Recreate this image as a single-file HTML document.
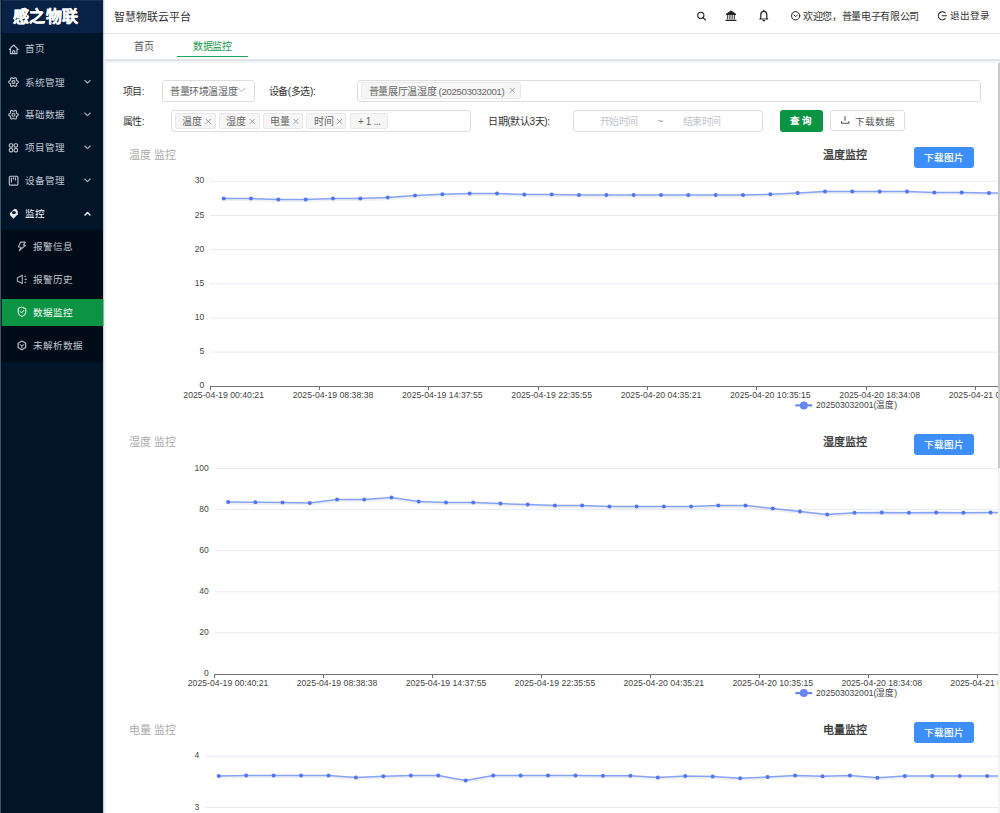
<!DOCTYPE html>
<html lang="zh-CN"><head><meta charset="utf-8">
<style>
*{box-sizing:border-box;margin:0;padding:0}
html,body{width:1000px;height:813px;overflow:hidden;font-family:"Liberation Sans",sans-serif;background:#fff;color:#333}
.a{position:absolute;white-space:nowrap}
.side{position:absolute;left:0;top:0;width:103px;height:813px;background:#011428}
.edge{position:absolute;left:0;top:0;width:1.2px;height:813px;background:#34596c;box-shadow:0.8px 0 0 #000a14}
.logo{position:absolute;left:0;top:0;width:103px;height:33px;background:#0a2146;border-top:1px solid #17304f;color:#fff;font-weight:bold;-webkit-text-stroke:0.35px #fff;font-size:16px;line-height:32px;padding-left:13px;letter-spacing:0.3px}
.mi{position:absolute;left:0;width:103px;height:33px;color:#c0c6cf;font-size:9.6px;line-height:33px}
.mi .t{position:absolute;left:25px;top:0}
.mi svg{position:absolute}
.sub{position:absolute;left:0;top:230px;width:103px;height:132px;background:#020c19}
.hdr{position:absolute;left:103px;top:0;width:897px;height:34px;background:#fff;border-bottom:1px solid #e6e6e6}
.tabs{position:absolute;left:103px;top:34px;width:897px;height:25px;background:#fff}
.band{position:absolute;left:105px;top:58.8px;width:895px;height:2.2px;background:#e2e2e2}
.band2{position:absolute;left:105px;top:61px;width:895px;height:1.8px;background:#f0f3f8}
.shadow{position:absolute;left:103px;top:0;width:1.6px;height:813px;background:linear-gradient(to right,#b8bcc4,rgba(255,255,255,0))}
.cardl{position:absolute;left:105.2px;top:62.8px;width:1.2px;height:751px;background:#f1f1f3}
.lbl{position:absolute;font-size:10px;letter-spacing:-0.38px;color:#333;line-height:23.2px;white-space:nowrap}
.box{position:absolute;border:1px solid #dedede;border-radius:3px;background:#fff}
.tag{position:absolute;height:16px;top:112.5px;background:#f6f6f7;border:1px solid #e8e8ea;border-radius:2px;font-size:9.5px;color:#666;line-height:14px;white-space:nowrap}
.btn{position:absolute;border-radius:3px;font-size:9.5px;line-height:21px;text-align:center;white-space:nowrap}
.gt{position:absolute;left:129px;font-size:11px;line-height:16px;color:#aaa;white-space:nowrap}
.ct{position:absolute;left:823px;font-size:11px;line-height:16px;color:#333;-webkit-text-stroke:0.3px #333;white-space:nowrap}
.dl{position:absolute;left:914.4px;width:60px;height:21.4px;background:#3d8ef8;border-radius:3px;color:#fff;-webkit-text-stroke:0.2px #fff;font-size:9.5px;line-height:21.4px;text-align:center}
.ch{position:absolute;left:0;top:0;pointer-events:none}
.yl{font-size:8.5px;fill:#444;font-family:"Liberation Sans",sans-serif}
.xl{font-size:8.7px;fill:#444;font-family:"Liberation Sans",sans-serif}
.lg{font-size:8.6px;fill:#444;font-family:"Liberation Sans",sans-serif}
</style></head><body>
<div class="side">
  <div class="logo">感之物联</div>
  <div class="mi" style="top:32.3px"><span class="t">首页</span></div>
  <div class="mi" style="top:65.8px"><span class="t">系统管理</span></div>
  <div class="mi" style="top:97.7px"><span class="t">基础数据</span></div>
  <div class="mi" style="top:130.7px"><span class="t">项目管理</span></div>
  <div class="mi" style="top:163.6px"><span class="t">设备管理</span></div>
  <div class="mi" style="top:197px;color:#fff"><span class="t">监控</span></div>
  <div class="sub"></div>
  <div style="position:absolute;left:0;top:298.5px;width:103.5px;height:27px;background:#0a9444"></div>
  <div class="mi" style="top:230px"><span class="t" style="left:33px">报警信息</span></div>
  <div class="mi" style="top:263px"><span class="t" style="left:33px">报警历史</span></div>
  <div class="mi" style="top:296px;color:#fff"><span class="t" style="left:33px">数据监控</span></div>
  <div class="mi" style="top:329px"><span class="t" style="left:33px">未解析数据</span></div>
</div>
<div class="hdr"></div>
<div class="a" style="left:114px;top:9px;font-size:11px;line-height:16px;color:#333">智慧物联云平台</div>
<div class="a" style="left:803px;top:8.7px;font-size:10px;letter-spacing:-0.35px;line-height:16px;color:#333">欢迎您，普量电子有限公司</div>
<div class="a" style="left:950px;top:8px;font-size:9.6px;line-height:16px;color:#333">退出登录</div>
<div class="tabs"></div>
<div class="a" style="left:134px;top:38.8px;font-size:10px;letter-spacing:-0.4px;line-height:16px;color:#555">首页</div>
<div class="a" style="left:193px;top:38.8px;font-size:10px;letter-spacing:-0.4px;line-height:16px;color:#1a9a50">数据监控</div>
<div class="a" style="left:177px;top:55.6px;width:71px;height:1.2px;background:#2aa55e"></div>
<div class="band"></div>
<div class="band2"></div>
<div class="shadow"></div>
<div class="cardl"></div>

<!-- filters -->
<div class="lbl" style="left:122.6px;top:79.5px">项目:</div>
<div class="box" style="left:161.5px;top:79.5px;width:93px;height:22px"></div>
<div class="lbl" style="left:170px;top:79.5px;color:#606266">普量环境温湿度</div>
<div class="lbl" style="left:268.5px;top:79.5px">设备(多选):</div>
<div class="box" style="left:357px;top:79.5px;width:624px;height:22px"></div>
<div class="tag" style="left:361px;top:82px;width:160px;height:16.5px"></div>
<div class="lbl" style="left:368.8px;top:79.5px;color:#666">普量展厅温湿度 <span style="font-size:9.7px">(202503032001)</span></div>
<div class="lbl" style="left:122.6px;top:110px">属性:</div>
<div class="box" style="left:171px;top:109.5px;width:300px;height:22px"></div>
<div class="tag" style="left:175px;width:40.5px"></div>
<div class="tag" style="left:219px;width:40.5px"></div>
<div class="tag" style="left:262.7px;width:40.5px"></div>
<div class="tag" style="left:306.2px;width:40.2px"></div>
<div class="tag" style="left:350.4px;width:38px"></div>
<div class="lbl" style="left:182.2px;top:110px;color:#666">温度</div>
<div class="lbl" style="left:226.2px;top:110px;color:#666">湿度</div>
<div class="lbl" style="left:269.9px;top:110px;color:#666">电量</div>
<div class="lbl" style="left:314px;top:110px;color:#666">时间</div>
<div class="lbl" style="left:358px;top:110px;color:#666">+ 1 ...</div>
<svg class="ch" width="1000" height="813" viewBox="0 0 1000 813" fill="none" stroke="#888" stroke-width="0.8">
<path d="M205.8,118.9 L210.8,123.9 M210.8,118.9 L205.8,123.9"/>
<path d="M249.7,118.9 L254.7,123.9 M254.7,118.9 L249.7,123.9"/>
<path d="M293.4,118.9 L298.4,123.9 M298.4,118.9 L293.4,123.9"/>
<path d="M337.1,118.9 L342.1,123.9 M342.1,118.9 L337.1,123.9"/>
<path d="M510,87.9 L514.8,92.7 M514.8,87.9 L510,92.7"/>
</svg>
<div class="lbl" style="left:488px;top:110px">日期(默认3天):</div>
<div class="box" style="left:572.5px;top:109.5px;width:190px;height:22px"></div>
<div class="lbl" style="left:599.5px;top:110px;color:#c0c4cc">开始时间</div>
<div class="lbl" style="left:657.5px;top:110px;color:#999">~</div>
<div class="lbl" style="left:682.5px;top:110px;color:#c0c4cc">结束时间</div>
<div class="btn" style="left:779.5px;top:110px;width:43px;height:21.5px;background:#0a9444;color:#fff;font-weight:bold">查 询</div>
<div class="btn" style="left:829.5px;top:109.5px;width:75px;height:21.5px;border:1px solid #dedede;color:#555;padding-left:15px">下载数据</div>

<div class="edge" style="z-index:5"></div>
<!--ICONS-->
<svg class="ch" width="1000" height="813" viewBox="0 0 1000 813" fill="none" stroke-linecap="round" stroke-linejoin="round">
<g stroke="#bcc3cc" stroke-width="1.15">
<path d="M9.3,49.3 L13.7,45 L18.1,49.3 M10.4,48.3 V53.6 H17 V48.3 M12.6,53.6 V51.3 Q13.7,50 14.8,51.3 V53.6"/>
<path d="M13.50,78.60 L13.81,78.53 L14.16,78.33 L14.57,78.09 L15.03,77.89 L15.49,77.83 L15.90,77.94 L16.20,78.24 L16.38,78.67 L16.43,79.17 L16.43,79.64 L16.44,80.04 L16.53,80.35 L16.75,80.58 L17.09,80.79 L17.51,81.03 L17.91,81.32 L18.19,81.69 L18.30,82.10 L18.19,82.51 L17.91,82.88 L17.51,83.17 L17.09,83.41 L16.75,83.62 L16.53,83.85 L16.44,84.16 L16.43,84.56 L16.43,85.03 L16.38,85.53 L16.20,85.96 L15.90,86.26 L15.49,86.37 L15.03,86.31 L14.57,86.11 L14.16,85.87 L13.81,85.67 L13.50,85.60 L13.19,85.67 L12.84,85.87 L12.43,86.11 L11.97,86.31 L11.51,86.37 L11.10,86.26 L10.80,85.96 L10.62,85.53 L10.57,85.03 L10.57,84.56 L10.56,84.16 L10.47,83.85 L10.25,83.62 L9.91,83.41 L9.49,83.17 L9.09,82.88 L8.81,82.51 L8.70,82.10 L8.81,81.69 L9.09,81.32 L9.49,81.03 L9.91,80.79 L10.25,80.58 L10.47,80.35 L10.56,80.04 L10.57,79.64 L10.57,79.17 L10.62,78.67 L10.80,78.24 L11.10,77.94 L11.51,77.83 L11.97,77.89 L12.43,78.09 L12.84,78.33 L13.19,78.53 L13.50,78.60 Z"/>
<circle cx="13.5" cy="82.1" r="1.5"/>
<path d="M13.50,111.20 L13.81,111.13 L14.16,110.93 L14.57,110.69 L15.03,110.49 L15.49,110.43 L15.90,110.54 L16.20,110.84 L16.38,111.27 L16.43,111.77 L16.43,112.24 L16.44,112.64 L16.53,112.95 L16.75,113.18 L17.09,113.39 L17.51,113.63 L17.91,113.92 L18.19,114.29 L18.30,114.70 L18.19,115.11 L17.91,115.48 L17.51,115.77 L17.09,116.01 L16.75,116.22 L16.53,116.45 L16.44,116.76 L16.43,117.16 L16.43,117.63 L16.38,118.13 L16.20,118.56 L15.90,118.86 L15.49,118.97 L15.03,118.91 L14.57,118.71 L14.16,118.47 L13.81,118.27 L13.50,118.20 L13.19,118.27 L12.84,118.47 L12.43,118.71 L11.97,118.91 L11.51,118.97 L11.10,118.86 L10.80,118.56 L10.62,118.13 L10.57,117.63 L10.57,117.16 L10.56,116.76 L10.47,116.45 L10.25,116.22 L9.91,116.01 L9.49,115.77 L9.09,115.48 L8.81,115.11 L8.70,114.70 L8.81,114.29 L9.09,113.92 L9.49,113.63 L9.91,113.39 L10.25,113.18 L10.47,112.95 L10.56,112.64 L10.57,112.24 L10.57,111.77 L10.62,111.27 L10.80,110.84 L11.10,110.54 L11.51,110.43 L11.97,110.49 L12.43,110.69 L12.84,110.93 L13.19,111.13 L13.50,111.20 Z"/>
<circle cx="13.5" cy="114.7" r="1.5"/>
<rect x="9.3" y="143.7" width="3.4" height="3.4" rx="1.2"/><rect x="14.1" y="143.7" width="3.4" height="3.4" rx="1.2"/>
<rect x="9.3" y="148.5" width="3.4" height="3.4" rx="1.2"/><rect x="14.1" y="148.5" width="3.4" height="3.4" rx="1.2"/>
<rect x="9.3" y="176.2" width="8.6" height="8.9" rx="1.2"/>
<path d="M11.4,178 V182.2 M13.4,177.8 V179 M15.5,177.8 V180"/>
<path d="M84.8,80.3 L87.5,83 L90.2,80.3" stroke="#a9b1bc" stroke-width="1.1"/>
<path d="M84.8,113 L87.5,115.7 L90.2,113" stroke="#a9b1bc" stroke-width="1.1"/>
<path d="M84.8,146 L87.5,148.7 L90.2,146" stroke="#a9b1bc" stroke-width="1.1"/>
<path d="M84.8,179 L87.5,181.7 L90.2,179" stroke="#a9b1bc" stroke-width="1.1"/>
<path d="M20.6,242.1 L25.3,242.1 L23.4,245.1 L25.5,245.3 L19.4,250.6 L21,247.2 L18.4,247 Z" stroke="#aab2bd"/>
<path d="M17.4,277.7 L22.3,275.3 V283.5 L17.4,281.1 Z M24.9,276.6 L25.6,276.2 M25.1,279.4 L26.3,279.4 M24.9,282.2 L25.6,282.6" stroke="#aab2bd" stroke-width="1.1"/>
<path d="M21.9,341.1 L25.7,343.3 V347.6 L21.9,349.8 L18.1,347.6 V343.3 Z" stroke="#b8bec8" stroke-width="1.2"/><path d="M19.9,344.6 L21.9,345.8 L23.9,344.6 M21.9,345.8 V348" stroke="#b8bec8" stroke-width="1"/>
</g>
<path d="M14.6,208.7 Q17.2,208.9 17.7,211.2 L17.8,214.2 L13.5,218.7 L9.9,215.1 L9.8,213.2 Z" fill="#e8eaee"/>
<ellipse cx="13.9" cy="212.6" rx="1.9" ry="1.7" fill="#011428"/>
<path d="M85,215 L87.5,212.5 L90,215" stroke="#fff" stroke-width="1.4"/>
<path d="M22,307.2 L25.8,308.6 V312.2 Q25.8,315.3 22,316.6 Q18.2,315.3 18.2,312.2 V308.6 Z M20.3,311.6 L21.6,312.9 L23.8,310.4" stroke="#fff" stroke-width="1"/>
<g stroke="#222" stroke-width="1.2">
<circle cx="700.8" cy="15.3" r="3.1" stroke-width="1.1"/><path d="M703.2,17.7 L705.4,19.9" stroke-width="1.3"/>
</g>
<g stroke="#222" stroke-width="1">
<path d="M726.3,14.2 L731,10.9 L735.7,14.2 Z" fill="#222"/><path d="M727.7,15.2 V19 M729.9,15.2 V19 M732.1,15.2 V19 M734.3,15.2 V19"/><path d="M726,20.3 H736" stroke-width="1.3"/>
<path d="M759.9,19 H767.7 L766.8,17.8 V14.8 Q766.8,11.6 763.8,11.2 Q760.8,11.6 760.8,14.8 V17.8 Z M763,20.6 H764.6 M763.8,10.4 V11" stroke-width="1.2"/>
<circle cx="795.7" cy="15.8" r="4.1"/><path d="M793.9,14.9 L795.7,16.7 L797.5,14.9"/>
<path d="M945.1,12.9 A4,4 0 1 0 945.1,18.7 M942.2,15.8 H946.6" stroke-width="1.1"/>
</g>
<path d="M845,116.5 V120.3 M841.6,121.5 V123.2 H848.9 V121.5" stroke="#555" stroke-width="1.1"/>
<path d="M238.2,88.2 L241.5,91.8 L244.8,88.2" stroke="#b8b8b8" stroke-width="1"/>
</svg>
<!--/ICONS-->
<!--CHARTS-->
<div class="gt" style="top:146.5px">温度 监控</div>
<div class="ct" style="top:146.5px">温度监控</div>
<div class="dl" style="top:146.6px">下载图片</div>
<svg class="ch" width="1000" height="813" viewBox="0 0 1000 813"><line x1="210" x2="1000" y1="181.30" y2="181.30" stroke="#e6eaf2" stroke-width="1"/><text x="204.2" y="183.40" text-anchor="end" class="yl">30</text><line x1="210" x2="1000" y1="215.47" y2="215.47" stroke="#e6eaf2" stroke-width="1"/><text x="204.2" y="217.57" text-anchor="end" class="yl">25</text><line x1="210" x2="1000" y1="249.63" y2="249.63" stroke="#e6eaf2" stroke-width="1"/><text x="204.2" y="251.73" text-anchor="end" class="yl">20</text><line x1="210" x2="1000" y1="283.80" y2="283.80" stroke="#e6eaf2" stroke-width="1"/><text x="204.2" y="285.90" text-anchor="end" class="yl">15</text><line x1="210" x2="1000" y1="317.97" y2="317.97" stroke="#e6eaf2" stroke-width="1"/><text x="204.2" y="320.07" text-anchor="end" class="yl">10</text><line x1="210" x2="1000" y1="352.13" y2="352.13" stroke="#e6eaf2" stroke-width="1"/><text x="204.2" y="354.23" text-anchor="end" class="yl">5</text><text x="204.2" y="388.40" text-anchor="end" class="yl">0</text><line x1="210" x2="1000" y1="386.5" y2="386.5" stroke="#6e7079" stroke-width="1"/><line x1="210.50" x2="210.50" y1="386.5" y2="390.0" stroke="#6e7079" stroke-width="1"/><line x1="319.50" x2="319.50" y1="386.5" y2="390.0" stroke="#6e7079" stroke-width="1"/><line x1="428.50" x2="428.50" y1="386.5" y2="390.0" stroke="#6e7079" stroke-width="1"/><line x1="538.50" x2="538.50" y1="386.5" y2="390.0" stroke="#6e7079" stroke-width="1"/><line x1="647.50" x2="647.50" y1="386.5" y2="390.0" stroke="#6e7079" stroke-width="1"/><line x1="756.50" x2="756.50" y1="386.5" y2="390.0" stroke="#6e7079" stroke-width="1"/><line x1="866.50" x2="866.50" y1="386.5" y2="390.0" stroke="#6e7079" stroke-width="1"/><line x1="975.50" x2="975.50" y1="386.5" y2="390.0" stroke="#6e7079" stroke-width="1"/><text x="223.67" y="397.80" text-anchor="middle" class="xl">2025-04-19 00:40:21</text><text x="333.00" y="397.80" text-anchor="middle" class="xl">2025-04-19 08:38:38</text><text x="442.33" y="397.80" text-anchor="middle" class="xl">2025-04-19 14:37:55</text><text x="551.67" y="397.80" text-anchor="middle" class="xl">2025-04-19 22:35:55</text><text x="661.00" y="397.80" text-anchor="middle" class="xl">2025-04-20 04:35:21</text><text x="770.33" y="397.80" text-anchor="middle" class="xl">2025-04-20 10:35:15</text><text x="879.67" y="397.80" text-anchor="middle" class="xl">2025-04-20 18:34:08</text><text x="989.00" y="397.80" text-anchor="middle" class="xl">2025-04-21 00:33:02</text><polyline points="223.67,198.60 251.00,198.60 278.33,199.40 305.67,199.40 333.00,198.60 360.33,198.60 387.67,197.40 415.00,195.60 442.33,194.20 469.67,193.60 497.00,193.60 524.33,194.40 551.67,194.40 579.00,195.00 606.33,195.00 633.67,195.00 661.00,195.00 688.33,195.00 715.67,195.00 743.00,195.00 770.33,194.20 797.67,193.00 825.00,191.60 852.33,191.60 879.67,191.60 907.00,191.60 934.33,192.40 961.67,192.40 989.00,193.00 1016.33,193.20" fill="none" stroke="#000" stroke-opacity="0.06" stroke-width="2.5" transform="translate(0,1.5)"/><polyline points="223.67,198.60 251.00,198.60 278.33,199.40 305.67,199.40 333.00,198.60 360.33,198.60 387.67,197.40 415.00,195.60 442.33,194.20 469.67,193.60 497.00,193.60 524.33,194.40 551.67,194.40 579.00,195.00 606.33,195.00 633.67,195.00 661.00,195.00 688.33,195.00 715.67,195.00 743.00,195.00 770.33,194.20 797.67,193.00 825.00,191.60 852.33,191.60 879.67,191.60 907.00,191.60 934.33,192.40 961.67,192.40 989.00,193.00 1016.33,193.20" fill="none" stroke="#86a2f6" stroke-width="1.5"/><circle cx="223.67" cy="198.60" r="2" fill="#4d75f4"/><circle cx="251.00" cy="198.60" r="2" fill="#4d75f4"/><circle cx="278.33" cy="199.40" r="2" fill="#4d75f4"/><circle cx="305.67" cy="199.40" r="2" fill="#4d75f4"/><circle cx="333.00" cy="198.60" r="2" fill="#4d75f4"/><circle cx="360.33" cy="198.60" r="2" fill="#4d75f4"/><circle cx="387.67" cy="197.40" r="2" fill="#4d75f4"/><circle cx="415.00" cy="195.60" r="2" fill="#4d75f4"/><circle cx="442.33" cy="194.20" r="2" fill="#4d75f4"/><circle cx="469.67" cy="193.60" r="2" fill="#4d75f4"/><circle cx="497.00" cy="193.60" r="2" fill="#4d75f4"/><circle cx="524.33" cy="194.40" r="2" fill="#4d75f4"/><circle cx="551.67" cy="194.40" r="2" fill="#4d75f4"/><circle cx="579.00" cy="195.00" r="2" fill="#4d75f4"/><circle cx="606.33" cy="195.00" r="2" fill="#4d75f4"/><circle cx="633.67" cy="195.00" r="2" fill="#4d75f4"/><circle cx="661.00" cy="195.00" r="2" fill="#4d75f4"/><circle cx="688.33" cy="195.00" r="2" fill="#4d75f4"/><circle cx="715.67" cy="195.00" r="2" fill="#4d75f4"/><circle cx="743.00" cy="195.00" r="2" fill="#4d75f4"/><circle cx="770.33" cy="194.20" r="2" fill="#4d75f4"/><circle cx="797.67" cy="193.00" r="2" fill="#4d75f4"/><circle cx="825.00" cy="191.60" r="2" fill="#4d75f4"/><circle cx="852.33" cy="191.60" r="2" fill="#4d75f4"/><circle cx="879.67" cy="191.60" r="2" fill="#4d75f4"/><circle cx="907.00" cy="191.60" r="2" fill="#4d75f4"/><circle cx="934.33" cy="192.40" r="2" fill="#4d75f4"/><circle cx="961.67" cy="192.40" r="2" fill="#4d75f4"/><circle cx="989.00" cy="193.00" r="2" fill="#4d75f4"/><circle cx="1016.33" cy="193.20" r="2" fill="#4d75f4"/><line x1="795.4" x2="812.2" y1="405.40" y2="405.40" stroke="#5b7ff0" stroke-width="2"/><circle cx="803.8" cy="405.40" r="4" fill="#6686f2"/><text x="816.1" y="408.40" class="lg">202503032001(温度)</text></svg>
<div class="gt" style="top:434.0px">湿度 监控</div>
<div class="ct" style="top:434.0px">湿度监控</div>
<div class="dl" style="top:434.1px">下载图片</div>
<svg class="ch" width="1000" height="813" viewBox="0 0 1000 813"><line x1="214.5" x2="1000" y1="468.50" y2="468.50" stroke="#e6eaf2" stroke-width="1"/><text x="208.7" y="470.60" text-anchor="end" class="yl">100</text><line x1="214.5" x2="1000" y1="509.60" y2="509.60" stroke="#e6eaf2" stroke-width="1"/><text x="208.7" y="511.70" text-anchor="end" class="yl">80</text><line x1="214.5" x2="1000" y1="550.70" y2="550.70" stroke="#e6eaf2" stroke-width="1"/><text x="208.7" y="552.80" text-anchor="end" class="yl">60</text><line x1="214.5" x2="1000" y1="591.80" y2="591.80" stroke="#e6eaf2" stroke-width="1"/><text x="208.7" y="593.90" text-anchor="end" class="yl">40</text><line x1="214.5" x2="1000" y1="632.90" y2="632.90" stroke="#e6eaf2" stroke-width="1"/><text x="208.7" y="635.00" text-anchor="end" class="yl">20</text><text x="208.7" y="676.10" text-anchor="end" class="yl">0</text><line x1="214.5" x2="1000" y1="674.5" y2="674.5" stroke="#6e7079" stroke-width="1"/><line x1="214.50" x2="214.50" y1="674.5" y2="678.0" stroke="#6e7079" stroke-width="1"/><line x1="323.50" x2="323.50" y1="674.5" y2="678.0" stroke="#6e7079" stroke-width="1"/><line x1="432.50" x2="432.50" y1="674.5" y2="678.0" stroke="#6e7079" stroke-width="1"/><line x1="541.50" x2="541.50" y1="674.5" y2="678.0" stroke="#6e7079" stroke-width="1"/><line x1="650.50" x2="650.50" y1="674.5" y2="678.0" stroke="#6e7079" stroke-width="1"/><line x1="759.50" x2="759.50" y1="674.5" y2="678.0" stroke="#6e7079" stroke-width="1"/><line x1="868.50" x2="868.50" y1="674.5" y2="678.0" stroke="#6e7079" stroke-width="1"/><line x1="977.50" x2="977.50" y1="674.5" y2="678.0" stroke="#6e7079" stroke-width="1"/><text x="228.12" y="685.50" text-anchor="middle" class="xl">2025-04-19 00:40:21</text><text x="337.05" y="685.50" text-anchor="middle" class="xl">2025-04-19 08:38:38</text><text x="445.98" y="685.50" text-anchor="middle" class="xl">2025-04-19 14:37:55</text><text x="554.92" y="685.50" text-anchor="middle" class="xl">2025-04-19 22:35:55</text><text x="663.85" y="685.50" text-anchor="middle" class="xl">2025-04-20 04:35:21</text><text x="772.78" y="685.50" text-anchor="middle" class="xl">2025-04-20 10:35:15</text><text x="881.72" y="685.50" text-anchor="middle" class="xl">2025-04-20 18:34:08</text><text x="990.65" y="685.50" text-anchor="middle" class="xl">2025-04-21 00:33:02</text><polyline points="228.12,502.00 255.35,502.20 282.58,502.40 309.82,503.00 337.05,499.40 364.28,499.40 391.52,497.60 418.75,501.60 445.98,502.40 473.22,502.60 500.45,503.60 527.68,504.60 554.92,505.40 582.15,505.40 609.38,506.40 636.62,506.40 663.85,506.40 691.08,506.40 718.32,505.60 745.55,505.60 772.78,508.40 800.02,511.40 827.25,514.40 854.48,512.80 881.72,512.40 908.95,512.80 936.18,512.40 963.42,512.80 990.65,512.40 1017.88,512.60" fill="none" stroke="#000" stroke-opacity="0.06" stroke-width="2.5" transform="translate(0,1.5)"/><polyline points="228.12,502.00 255.35,502.20 282.58,502.40 309.82,503.00 337.05,499.40 364.28,499.40 391.52,497.60 418.75,501.60 445.98,502.40 473.22,502.60 500.45,503.60 527.68,504.60 554.92,505.40 582.15,505.40 609.38,506.40 636.62,506.40 663.85,506.40 691.08,506.40 718.32,505.60 745.55,505.60 772.78,508.40 800.02,511.40 827.25,514.40 854.48,512.80 881.72,512.40 908.95,512.80 936.18,512.40 963.42,512.80 990.65,512.40 1017.88,512.60" fill="none" stroke="#86a2f6" stroke-width="1.5"/><circle cx="228.12" cy="502.00" r="2" fill="#4d75f4"/><circle cx="255.35" cy="502.20" r="2" fill="#4d75f4"/><circle cx="282.58" cy="502.40" r="2" fill="#4d75f4"/><circle cx="309.82" cy="503.00" r="2" fill="#4d75f4"/><circle cx="337.05" cy="499.40" r="2" fill="#4d75f4"/><circle cx="364.28" cy="499.40" r="2" fill="#4d75f4"/><circle cx="391.52" cy="497.60" r="2" fill="#4d75f4"/><circle cx="418.75" cy="501.60" r="2" fill="#4d75f4"/><circle cx="445.98" cy="502.40" r="2" fill="#4d75f4"/><circle cx="473.22" cy="502.60" r="2" fill="#4d75f4"/><circle cx="500.45" cy="503.60" r="2" fill="#4d75f4"/><circle cx="527.68" cy="504.60" r="2" fill="#4d75f4"/><circle cx="554.92" cy="505.40" r="2" fill="#4d75f4"/><circle cx="582.15" cy="505.40" r="2" fill="#4d75f4"/><circle cx="609.38" cy="506.40" r="2" fill="#4d75f4"/><circle cx="636.62" cy="506.40" r="2" fill="#4d75f4"/><circle cx="663.85" cy="506.40" r="2" fill="#4d75f4"/><circle cx="691.08" cy="506.40" r="2" fill="#4d75f4"/><circle cx="718.32" cy="505.60" r="2" fill="#4d75f4"/><circle cx="745.55" cy="505.60" r="2" fill="#4d75f4"/><circle cx="772.78" cy="508.40" r="2" fill="#4d75f4"/><circle cx="800.02" cy="511.40" r="2" fill="#4d75f4"/><circle cx="827.25" cy="514.40" r="2" fill="#4d75f4"/><circle cx="854.48" cy="512.80" r="2" fill="#4d75f4"/><circle cx="881.72" cy="512.40" r="2" fill="#4d75f4"/><circle cx="908.95" cy="512.80" r="2" fill="#4d75f4"/><circle cx="936.18" cy="512.40" r="2" fill="#4d75f4"/><circle cx="963.42" cy="512.80" r="2" fill="#4d75f4"/><circle cx="990.65" cy="512.40" r="2" fill="#4d75f4"/><circle cx="1017.88" cy="512.60" r="2" fill="#4d75f4"/><line x1="795.4" x2="812.2" y1="693.10" y2="693.10" stroke="#5b7ff0" stroke-width="2"/><circle cx="803.8" cy="693.10" r="4" fill="#6686f2"/><text x="816.1" y="696.10" class="lg">202503032001(湿度)</text></svg>
<div class="gt" style="top:721.5px">电量 监控</div>
<div class="ct" style="top:721.5px">电量监控</div>
<div class="dl" style="top:721.6px">下载图片</div>
<svg class="ch" width="1000" height="813" viewBox="0 0 1000 813"><line x1="205" x2="1000" y1="756.25" y2="756.25" stroke="#e6eaf2" stroke-width="1"/><text x="199.2" y="758.35" text-anchor="end" class="yl">4</text><line x1="205" x2="1000" y1="807.50" y2="807.50" stroke="#e6eaf2" stroke-width="1"/><text x="199.2" y="809.60" text-anchor="end" class="yl">3</text><line x1="205" x2="1000" y1="858.75" y2="858.75" stroke="#e6eaf2" stroke-width="1"/><text x="199.2" y="860.85" text-anchor="end" class="yl">2</text><line x1="205" x2="1000" y1="910.00" y2="910.00" stroke="#e6eaf2" stroke-width="1"/><text x="199.2" y="912.10" text-anchor="end" class="yl">1</text><text x="199.2" y="963.35" text-anchor="end" class="yl">0</text><line x1="205" x2="1000" y1="961.5" y2="961.5" stroke="#6e7079" stroke-width="1"/><line x1="205.50" x2="205.50" y1="961.5" y2="965.0" stroke="#6e7079" stroke-width="1"/><line x1="314.50" x2="314.50" y1="961.5" y2="965.0" stroke="#6e7079" stroke-width="1"/><line x1="424.50" x2="424.50" y1="961.5" y2="965.0" stroke="#6e7079" stroke-width="1"/><line x1="534.50" x2="534.50" y1="961.5" y2="965.0" stroke="#6e7079" stroke-width="1"/><line x1="644.50" x2="644.50" y1="961.5" y2="965.0" stroke="#6e7079" stroke-width="1"/><line x1="753.50" x2="753.50" y1="961.5" y2="965.0" stroke="#6e7079" stroke-width="1"/><line x1="863.50" x2="863.50" y1="961.5" y2="965.0" stroke="#6e7079" stroke-width="1"/><line x1="973.50" x2="973.50" y1="961.5" y2="965.0" stroke="#6e7079" stroke-width="1"/><text x="218.72" y="972.75" text-anchor="middle" class="xl">2025-04-19 00:40:21</text><text x="328.50" y="972.75" text-anchor="middle" class="xl">2025-04-19 08:38:38</text><text x="438.28" y="972.75" text-anchor="middle" class="xl">2025-04-19 14:37:55</text><text x="548.06" y="972.75" text-anchor="middle" class="xl">2025-04-19 22:35:55</text><text x="657.83" y="972.75" text-anchor="middle" class="xl">2025-04-20 04:35:21</text><text x="767.61" y="972.75" text-anchor="middle" class="xl">2025-04-20 10:35:15</text><text x="877.39" y="972.75" text-anchor="middle" class="xl">2025-04-20 18:34:08</text><text x="987.17" y="972.75" text-anchor="middle" class="xl">2025-04-21 00:33:02</text><polyline points="218.72,776.00 246.17,775.60 273.61,775.60 301.06,775.60 328.50,775.60 355.94,777.60 383.39,776.20 410.83,775.60 438.28,775.60 465.72,780.60 493.17,775.60 520.61,775.60 548.06,775.60 575.50,775.60 602.94,775.80 630.39,775.80 657.83,777.60 685.28,776.00 712.72,776.40 740.17,778.20 767.61,777.00 795.06,775.50 822.50,776.20 849.94,775.50 877.39,777.70 904.83,776.00 932.28,776.00 959.72,776.00 987.17,776.00 1014.61,776.00" fill="none" stroke="#000" stroke-opacity="0.06" stroke-width="2.5" transform="translate(0,1.5)"/><polyline points="218.72,776.00 246.17,775.60 273.61,775.60 301.06,775.60 328.50,775.60 355.94,777.60 383.39,776.20 410.83,775.60 438.28,775.60 465.72,780.60 493.17,775.60 520.61,775.60 548.06,775.60 575.50,775.60 602.94,775.80 630.39,775.80 657.83,777.60 685.28,776.00 712.72,776.40 740.17,778.20 767.61,777.00 795.06,775.50 822.50,776.20 849.94,775.50 877.39,777.70 904.83,776.00 932.28,776.00 959.72,776.00 987.17,776.00 1014.61,776.00" fill="none" stroke="#86a2f6" stroke-width="1.5"/><circle cx="218.72" cy="776.00" r="2" fill="#4d75f4"/><circle cx="246.17" cy="775.60" r="2" fill="#4d75f4"/><circle cx="273.61" cy="775.60" r="2" fill="#4d75f4"/><circle cx="301.06" cy="775.60" r="2" fill="#4d75f4"/><circle cx="328.50" cy="775.60" r="2" fill="#4d75f4"/><circle cx="355.94" cy="777.60" r="2" fill="#4d75f4"/><circle cx="383.39" cy="776.20" r="2" fill="#4d75f4"/><circle cx="410.83" cy="775.60" r="2" fill="#4d75f4"/><circle cx="438.28" cy="775.60" r="2" fill="#4d75f4"/><circle cx="465.72" cy="780.60" r="2" fill="#4d75f4"/><circle cx="493.17" cy="775.60" r="2" fill="#4d75f4"/><circle cx="520.61" cy="775.60" r="2" fill="#4d75f4"/><circle cx="548.06" cy="775.60" r="2" fill="#4d75f4"/><circle cx="575.50" cy="775.60" r="2" fill="#4d75f4"/><circle cx="602.94" cy="775.80" r="2" fill="#4d75f4"/><circle cx="630.39" cy="775.80" r="2" fill="#4d75f4"/><circle cx="657.83" cy="777.60" r="2" fill="#4d75f4"/><circle cx="685.28" cy="776.00" r="2" fill="#4d75f4"/><circle cx="712.72" cy="776.40" r="2" fill="#4d75f4"/><circle cx="740.17" cy="778.20" r="2" fill="#4d75f4"/><circle cx="767.61" cy="777.00" r="2" fill="#4d75f4"/><circle cx="795.06" cy="775.50" r="2" fill="#4d75f4"/><circle cx="822.50" cy="776.20" r="2" fill="#4d75f4"/><circle cx="849.94" cy="775.50" r="2" fill="#4d75f4"/><circle cx="877.39" cy="777.70" r="2" fill="#4d75f4"/><circle cx="904.83" cy="776.00" r="2" fill="#4d75f4"/><circle cx="932.28" cy="776.00" r="2" fill="#4d75f4"/><circle cx="959.72" cy="776.00" r="2" fill="#4d75f4"/><circle cx="987.17" cy="776.00" r="2" fill="#4d75f4"/><circle cx="1014.61" cy="776.00" r="2" fill="#4d75f4"/><line x1="795.4" x2="812.2" y1="980.35" y2="980.35" stroke="#5b7ff0" stroke-width="2"/><circle cx="803.8" cy="980.35" r="4" fill="#6686f2"/><text x="816.1" y="983.35" class="lg">202503032001(电量)</text></svg>
<!--/CHARTS-->
<div style="z-index:6;position:absolute;left:997.8px;top:63px;width:2.2px;height:405px;background:#c8c8c8;border-radius:1px 0 0 0"></div>
<div style="z-index:6;position:absolute;left:997.8px;top:468px;width:2.2px;height:345px;background:#f3f3f3"></div>
</body></html>
